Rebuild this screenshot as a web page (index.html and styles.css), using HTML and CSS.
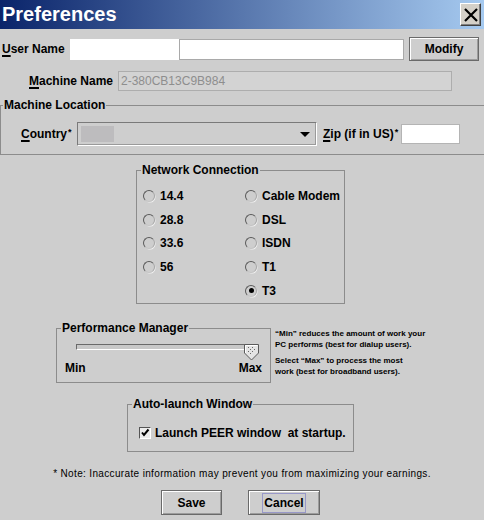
FILE: index.html
```html
<!DOCTYPE html>
<html lang="en">
<head>
  <meta charset="UTF-8" />
  <title>Preferences</title>
  <link rel="stylesheet" href="styles.css">
</head>
<body>
  <div class="window">
    <!-- Title bar -->
    <div class="titlebar">
      <span class="title">Preferences</span>
      <span class="close-btn">
        <svg width="14" height="14" viewBox="0 0 14 14">
          <path d="M1 1 L13 13 M13 1 L1 13" stroke="#000" stroke-width="2.2" fill="none" />
        </svg>
      </span>
    </div>

    <div class="row user-row">
      <label class="lbl user-lbl"><span class="mn">U</span>ser Name</label>
      <div class="field first-name"></div>
      <div class="field last-name"></div>
      <div class="btn modify-btn">Modify</div>
    </div>

    <div class="row machine-row">
      <label class="lbl machine-lbl"><span class="mn">M</span>achine Name</label>
      <div class="field disabled-field">2-380CB13C9B984</div>
    </div>

    <fieldset class="group location-group">
      <legend>Machine Location</legend>
      <div class="row country-row">
        <label class="lbl country-lbl"><span class="mn">C</span>ountry<span class="req">*</span></label>
        <div class="combo">
          <span class="combo-value"></span>
          <span class="combo-arrow"></span>
        </div>
        <label class="lbl zip-lbl"><span class="mn">Z</span>ip (if in US)<span class="req">*</span></label>
        <div class="field zip-field"></div>
      </div>
    </fieldset>

    <fieldset class="group network-group">
      <legend>Network Connection</legend>
      <div class="radio-grid">
        <label class="radio"><span class="radio-dot"></span>14.4</label>
        <label class="radio"><span class="radio-dot"></span>28.8</label>
        <label class="radio"><span class="radio-dot"></span>33.6</label>
        <label class="radio"><span class="radio-dot"></span>56</label>
        <span></span>
        <label class="radio"><span class="radio-dot"></span>Cable Modem</label>
        <label class="radio"><span class="radio-dot"></span>DSL</label>
        <label class="radio"><span class="radio-dot"></span>ISDN</label>
        <label class="radio"><span class="radio-dot"></span>T1</label>
        <label class="radio"><span class="radio-dot checked"></span>T3</label>
      </div>
    </fieldset>

    <div class="perf-row">
      <fieldset class="group perf-group">
        <legend>Performance Manager</legend>
        <div class="slider">
          <div class="slider-track"></div>
          <svg class="slider-thumb" width="16" height="17" viewBox="0 0 16 17">
            <path d="M0.5 0.5 H14.5 V9 L7.5 16 L0.5 9 Z" fill="#e4e4e4" stroke="#5a5a5a" />
            <path d="M1.5 9 V1.5 H13.5" fill="none" stroke="#fff" />
            <g fill="#6a6a6a">
              <rect x="4" y="3" width="1" height="1" />
              <rect x="8" y="3" width="1" height="1" />
              <rect x="6" y="5" width="1" height="1" />
              <rect x="10" y="5" width="1" height="1" />
              <rect x="4" y="7" width="1" height="1" />
              <rect x="8" y="7" width="1" height="1" />
              <rect x="6" y="9" width="1" height="1" />
            </g>
          </svg>
        </div>
        <div class="slider-labels">
          <span>Min</span>
          <span>Max</span>
        </div>
      </fieldset>
      <div class="perf-help">
        <p>“Min” reduces the amount of work your<br>PC performs (best for dialup users).</p>
        <p>Select “Max” to process the most<br>work (best for broadband users).</p>
      </div>
    </div>

    <fieldset class="group launch-group">
      <legend>Auto-launch Window</legend>
      <label class="check-row">
        <span class="checkbox">
          <svg width="10" height="10" viewBox="0 0 10 10">
            <path d="M2 4.5 L4 7 L8.5 1.5" stroke="#000" stroke-width="2" fill="none" />
          </svg>
        </span>
        Launch PEER window&nbsp; at startup.
      </label>
    </fieldset>

    <p class="note">* Note: Inaccurate information may prevent you from maximizing your earnings.</p>

    <div class="actions">
      <div class="btn save-btn">Save</div>
      <div class="btn cancel-btn"><span class="focus-ring">Cancel</span></div>
    </div>
  </div>
</body>
</html>
```

FILE: styles.css
```css
body {
  margin: 0;
  background-color: #cecece;
  font-family: "Liberation Sans", Arial, sans-serif;
  font-size: 12px;
  font-weight: bold;
  color: #000;
}

.window {
  width: 484px;
  height: 520px;
  overflow: hidden;
  background-color: #cecece;
}

/* Title bar */
.titlebar {
  height: 29px;
  display: flex;
  align-items: center;
  justify-content: space-between;
  padding: 0 3px 0 2px;
  background: linear-gradient(to right, #0a246a, #a6caf0);
}

.title {
  color: #fff;
  font-size: 20px;
  font-weight: bold;
}

.close-btn {
  width: 21px;
  height: 23px;
  box-sizing: border-box;
  display: flex;
  align-items: center;
  justify-content: center;
  background-color: #d4d0c8;
  border: 1px solid;
  border-color: #fff #404040 #404040 #fff;
  box-shadow: inset -1px -1px #808080;
}

/* Generic rows, labels and fields */
.row {
  display: flex;
  align-items: center;
}

.lbl {
  white-space: nowrap;
}

.mn {
  text-decoration: underline;
  text-decoration-thickness: 2px;
  text-underline-offset: 2px;
}

.req {
  font-size: 9px;
  vertical-align: 3px;
  margin-left: 1px;
}

.field {
  box-sizing: border-box;
  background-color: #fff;
}

.btn {
  box-sizing: border-box;
  display: flex;
  align-items: center;
  justify-content: center;
  background-color: #cecece;
  border: 1px solid #6a6a6a;
  box-shadow: inset 1px 1px #fff, inset -1px -1px #9c9c9c;
}

.user-row {
  margin-top: 8px;
  height: 24px;
  padding-left: 2px;
}

.user-lbl {
  width: 68px;
}

.first-name {
  width: 109px;
  height: 21px;
}

.last-name {
  width: 225px;
  height: 21px;
  border: 1px solid #a9a9a9;
}

.modify-btn {
  width: 70px;
  height: 24px;
  margin-left: 5px;
}

.machine-row {
  margin-top: 10px;
  height: 20px;
  padding-left: 29px;
}

.machine-lbl {
  width: 89px;
}

.disabled-field {
  width: 334px;
  height: 20px;
  padding-left: 2px;
  line-height: 18px;
  background-color: #d3d3d3;
  border: 1px solid #adadad;
  font-weight: normal;
  color: #8e8e8e;
}

/* Titled borders */
.group {
  margin: 0;
  padding: 0;
  min-width: 0;
  box-sizing: border-box;
  border: 1px solid #8c8c8c;
}

.group legend {
  margin-left: 4px;
  padding: 0 1px;
  line-height: 14px;
}

.location-group {
  margin-top: 7px;
  width: 100%;
  border-right: none;
  padding-bottom: 8px;
}

.location-group legend {
  margin-left: 2px;
}

.country-row {
  margin-top: 10px;
  height: 24px;
  padding-left: 20px;
}

.country-lbl {
  width: 56px;
}

.combo {
  box-sizing: border-box;
  width: 240px;
  height: 24px;
  display: flex;
  align-items: center;
  justify-content: space-between;
  padding: 0 6px 0 3px;
  border: 1px solid;
  border-color: #7a7a7a #fff #fff #7a7a7a;
  box-shadow: inset -1px -1px #9a9a9a;
}

.combo-value {
  width: 33px;
  height: 16px;
  background-color: #bdbcbe;
}

.combo-arrow {
  width: 0;
  height: 0;
  border-left: 5px solid transparent;
  border-right: 5px solid transparent;
  border-top: 5px solid #000;
}

.zip-lbl {
  width: 78px;
  margin-left: 6px;
}

.zip-field {
  width: 59px;
  height: 20px;
  border: 1px solid #b4b4b4;
}

/* Network connection radios */
.network-group {
  margin: 8px 0 0 136px;
  width: 209px;
  padding-bottom: 1px;
}

.radio-grid {
  display: grid;
  grid-template-columns: 102px 1fr;
  grid-template-rows: repeat(5, 23.7px);
  grid-auto-flow: column;
  margin-top: 7px;
  padding-left: 6px;
}

.radio {
  display: flex;
  align-items: center;
}

.radio-dot {
  box-sizing: border-box;
  width: 12px;
  height: 12px;
  margin-right: 5px;
  border-radius: 50%;
  border: 1px solid;
  border-color: #5a5a5a #a8a8a8 #c4c4c4 #5a5a5a;
  box-shadow: 1px 1px 0 -0.5px #f4f4f4;
  display: flex;
  align-items: center;
  justify-content: center;
}

.radio-dot.checked::after {
  content: "";
  width: 5px;
  height: 5px;
  border-radius: 50%;
  background-color: #000;
}

/* Performance slider */
.perf-row {
  display: flex;
  align-items: flex-start;
  margin-top: 17px;
}

.perf-group {
  margin-left: 56px;
  width: 215px;
  padding-bottom: 7px;
}

.slider {
  position: relative;
  height: 16px;
  margin-top: 9px;
  padding-left: 19px;
}

.slider-track {
  box-sizing: border-box;
  width: 174px;
  height: 6px;
  margin-top: 6px;
  background-color: #c8c8c8;
  border: 1px solid;
  border-color: #6a6a6a #fff #fff #6a6a6a;
}

/* thumb sits over the right end of the track */
.slider-thumb {
  position: absolute;
  left: 187px;
  top: 0;
}

.slider-labels {
  display: flex;
  justify-content: space-between;
  line-height: 14px;
  padding: 1px 8px 0 8px;
}

.perf-help {
  margin: 8px 0 0 4px;
  font-size: 8px;
  line-height: 10.5px;
}

.perf-help p {
  margin: 0 0 6px 0;
}

/* Auto launch */
.launch-group {
  margin: 14px 0 0 127px;
  width: 227px;
  padding-bottom: 11px;
}

.check-row {
  display: flex;
  align-items: center;
  height: 14px;
  margin-top: 15px;
  padding-left: 11px;
}

.checkbox {
  box-sizing: border-box;
  width: 12px;
  height: 12px;
  margin-right: 4px;
  display: flex;
  align-items: center;
  justify-content: center;
  background-color: #ececec;
  border: 1px solid;
  border-color: #555 #fff #fff #555;
}

.note {
  margin: 15px 0 0 0;
  text-align: center;
  font-size: 10px;
  font-weight: normal;
  letter-spacing: 0.35px;
  line-height: 14px;
}

.actions {
  display: flex;
  justify-content: center;
  gap: 26px;
  margin-top: 9px;
  padding-right: 3px;
}

.save-btn {
  width: 61px;
  height: 25px;
}

.cancel-btn {
  width: 72px;
  height: 25px;
}

.focus-ring {
  padding: 2px 1px;
  border: 1px solid #9898c8;
}
```
